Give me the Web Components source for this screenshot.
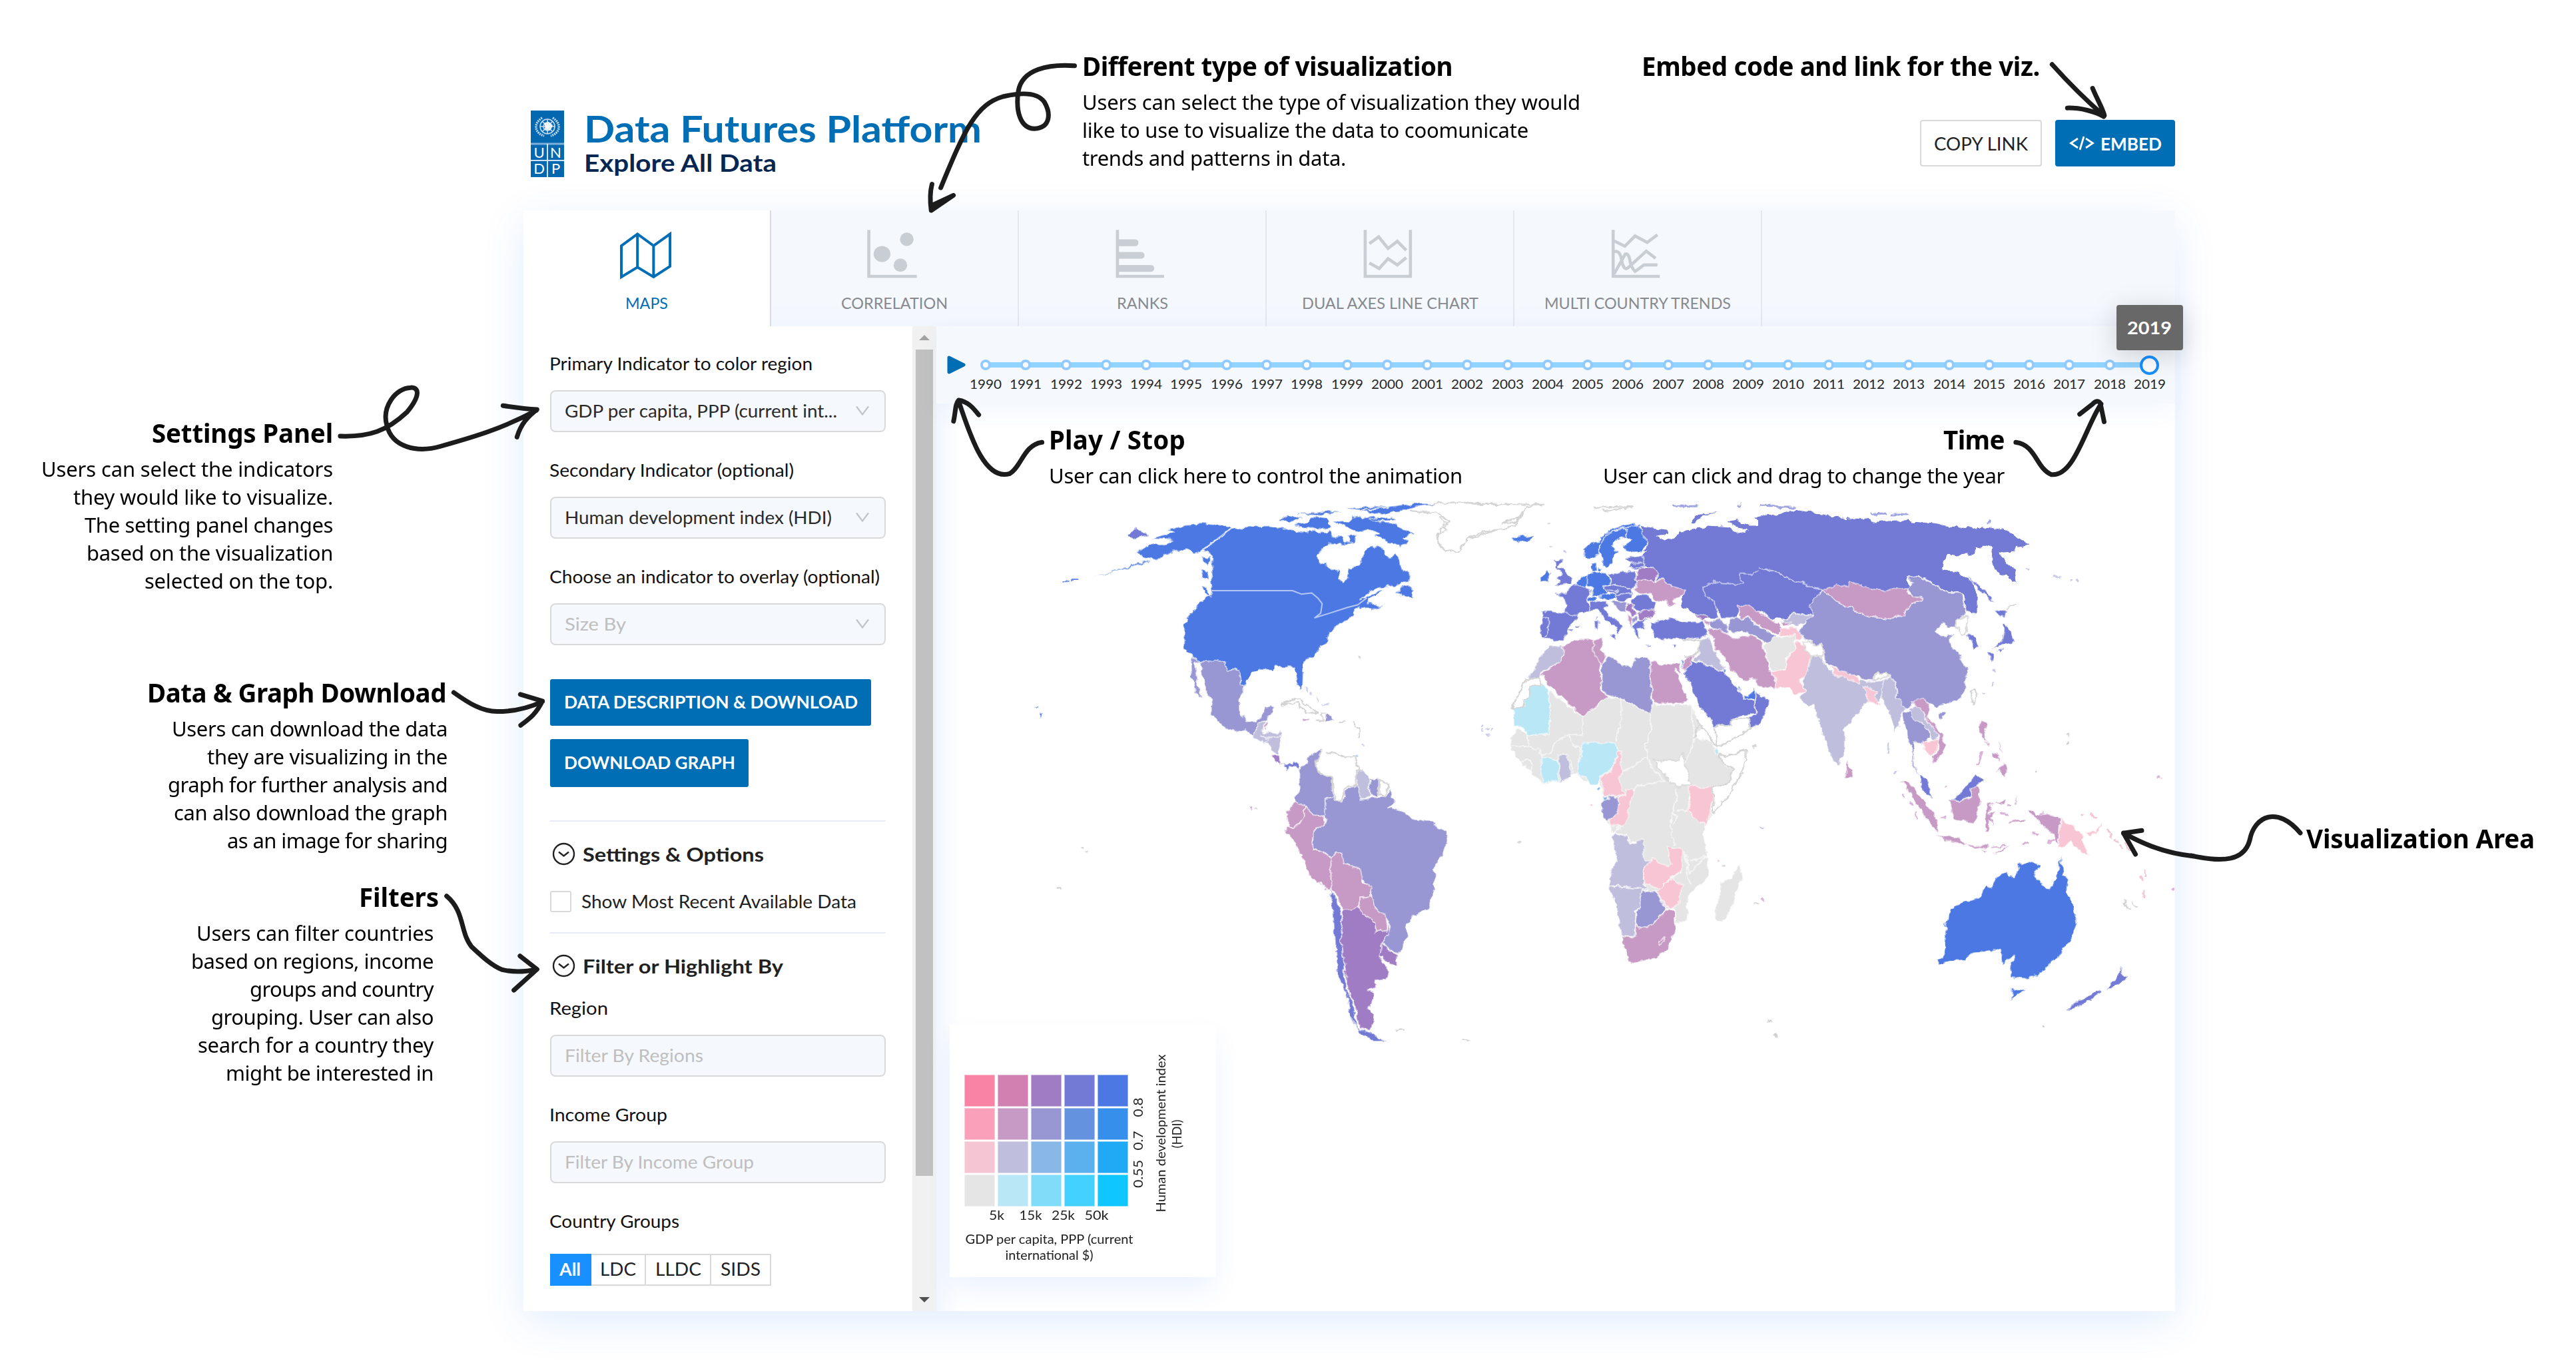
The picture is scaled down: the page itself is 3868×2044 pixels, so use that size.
<!DOCTYPE html>
<html lang="en">
<head>
<meta charset="utf-8">
<title>Data Futures Platform</title>
<style>
html,body{margin:0;padding:0;background:#fff;overflow:hidden}
body{width:3868px;height:2044px;position:relative;font-family:Lato,"Liberation Sans",sans-serif;color:#212121}
</style>
</head>
<body>
<data-platform></data-platform>
<note-arrows></note-arrows>

<note-card style="left:1625px;top:72px"><fit-text track slot="title" w="556">Different type of visualization</fit-text><fit-text track w="748">Users can select the type of visualization they would</fit-text><fit-text track w="670">like to use to visualize the data to coomunicate</fit-text><fit-text track w="396">trends and patterns in data.</fit-text></note-card>
<note-card style="left:2465px;top:72px"><fit-text track slot="title" w="598">Embed code and link for the viz.</fit-text></note-card>
<note-card class="end" style="right:3368px;top:623px"><fit-text track slot="title" w="272">Settings Panel</fit-text><fit-text track w="438">Users can select the indicators</fit-text><fit-text track w="390">they would like to visualize.</fit-text><fit-text track w="373">The setting panel changes</fit-text><fit-text track w="370">based on the visualization</fit-text><fit-text track w="283">selected on the top.</fit-text></note-card>
<note-card class="end" style="right:3196px;top:1013px"><fit-text track slot="title" w="449" style="margin-right:2px">Data &amp; Graph Download</fit-text><fit-text track w="414">Users can download the data</fit-text><fit-text track w="361">they are visualizing in the</fit-text><fit-text track w="420">graph for further analysis and</fit-text><fit-text track w="411">can also download the graph</fit-text><fit-text track w="331">as an image for sharing</fit-text></note-card>
<note-card class="end" style="right:3217px;top:1320px"><fit-text track slot="title" w="120" style="margin-right:-8px">Filters</fit-text><fit-text track w="356">Users can filter countries</fit-text><fit-text track w="364">based on regions, income</fit-text><fit-text track w="276">groups and country</fit-text><fit-text track w="334">grouping. User can also</fit-text><fit-text track w="354">search for a country they</fit-text><fit-text track w="312">might be interested in</fit-text></note-card>
<note-card style="left:1575px;top:633px"><fit-text track slot="title" w="205">Play / Stop</fit-text><fit-text track w="621">User can click here to control the animation</fit-text></note-card>
<note-card class="end" style="right:858px;top:633px"><fit-text track slot="title" w="92">Time</fit-text><fit-text track w="603">User can click and drag to change the year</fit-text></note-card>
<note-card style="left:3463px;top:1232px"><fit-text track slot="title" w="343">Visualization Area</fit-text></note-card>

<script>
const make = (name, html, setup) => customElements.define(name, class extends HTMLElement {
  constructor(){ super(); this.attachShadow({mode:'open'}); }
  connectedCallback(){
    if (this.ready) return; this.ready = true;
    this.shadowRoot.innerHTML = typeof html === 'function' ? html(this) : html;
    if (setup) setup(this);
  }
});

/* Annotation block: bold title with copy lines under it */
make('note-card', `<style>
:host{position:absolute;z-index:6;display:flex;flex-direction:column;align-items:flex-start;font:31px/42px "Noto Sans",sans-serif;color:#000}
:host(.end){align-items:flex-end}
::slotted([slot=title]){font:700 38.5px/50px "Noto Sans",sans-serif;padding-top:2px;margin-bottom:8px}
</style><slot name="title"></slot><slot></slot>`);

/* Hand-drawn arrows lying over the page */
make('note-arrows', `<style>
:host{position:absolute;z-index:5;inset:0;display:block;pointer-events:none}
svg{display:block}
path{fill:none;stroke:#1c1c1c;stroke-width:7;stroke-linecap:round;stroke-linejoin:round;vector-effect:non-scaling-stroke}
</style><svg width="3868" height="2044" viewBox="0 0 3868 2044">
<g transform="translate(760 60) scale(.57398 .33333)">
<path d="M1487,116 C1420,108 1350,130 1340,230 C1332,320 1345,398 1382,400 C1425,395 1425,330 1408,280 C1390,235 1350,235 1300,255 C1230,290 1200,400 1137,666"/>
<path d="M1114,650 C1108,690 1109,730 1112,768 L1170,700 L1114,745 L1150,722"/></g>
<g transform="translate(2400 60) scale(.57398 .35714)">
<path d="M1187,103 C1230,180 1270,245 1322,318 M1293,203 C1302,240 1320,290 1324,318 L1322,322 C1300,300 1260,285 1227,286"/></g>
<g transform="translate(40 540) scale(.5102 .71429)">
<path d="M923,161 C1010,163 1060,150 1120,110 C1160,75 1155,58 1130,59 C1085,60 1045,100 1060,138 C1075,185 1150,197 1220,182 C1320,162 1400,145 1500,107 M1402,97 C1430,100 1470,104 1502,105 C1475,120 1455,135 1443,163"/>
<path d="M1257,700 C1300,722 1340,740 1385,740 C1430,740 1470,735 1518,719 M1453,704 L1518,718 C1500,745 1480,755 1454,769"/>
<path d="M1236,1128 C1290,1160 1275,1205 1310,1235 C1340,1255 1370,1275 1400,1283 C1430,1288 1470,1287 1502,1282 M1452,1254 L1502,1282 L1434,1326"/></g>
<g transform="translate(1400 500) scale(.54847 .33333)">
<path d="M300,493 C250,505 245,600 212,634 C140,670 100,440 72,308 M58,398 C64,355 62,320 72,303 C100,310 115,345 127,369"/></g>
<g transform="translate(2380 620) scale(.57398 .33333)">
<path d="M1127,133 C1180,145 1180,250 1220,278 C1280,290 1310,60 1350,-40 M1294,6 L1328,-40 Q1340,-62 1348,-44 L1358,40"/></g>
<g transform="translate(2640 740) scale(.40816 .54847)">
<path d="M1344,932 C1400,955 1480,985 1600,995"/><path d="M1411,925 L1344,932 L1388,990"/></g>
<path d="M3290,1285 C3340,1296 3370,1292 3378,1262 C3385,1225 3420,1210 3454,1251"/>
</svg>`);

/* The application frame */
make('data-platform', `<style>
:host{display:flex;flex-direction:column;width:2480px;height:1969px;padding-left:786px}
.frame{display:flex;flex-direction:column;height:1653px;background:#fff;box-shadow:0 16px 60px rgba(0,110,255,.12)}
.body{display:flex;height:1479px}
</style>
<app-header></app-header>
<div class="frame"><tab-strip></tab-strip><div class="body"><settings-panel></settings-panel><viz-area></viz-area></div></div>`);

make('app-header', `<style>
:host{display:flex;height:150px;padding:166px 0 0 11px}
.logo{flex:none;width:50px;height:100px}
.names{display:flex;flex-direction:column;margin:-2px 0 0 30px;font-weight:700}
.t{font-size:56px;line-height:58px;color:#006eb5}
.s{font-size:37px;line-height:44px;color:#072652}
.acts{display:flex;margin:14px 0 0 auto;gap:20px}
.b{box-sizing:border-box;height:70px;display:flex;align-items:center;justify-content:center;gap:9px;font-size:27px;border-radius:4px}
.c{width:183px;border:2px solid #d9d9d9;color:#212121}
.e{width:180px;background:#006eb5;color:#fff;font-weight:700}
</style>
<svg class="logo" viewBox="0 0 50 100"><path fill="#0468b1" d="M0 0h50v100H0z"/><g fill="none" stroke="#c3dcf0" stroke-width="1.6"><circle cx="25" cy="24" r="11"/><circle cx="25" cy="24" r="6"/><path d="M14 24h22M25 13v22M17 16l16 16M33 16L17 32"/><path stroke-width="3.4" stroke-dasharray="2 1.2" d="M17 11C3 20 6 34 20 38M33 11c14 9 11 23-3 27"/></g><path fill="#fff" opacity=".85" d="M20 19l7-2 6 5-4 8-7-1z"/><path stroke="#7fb0d9" stroke-width="3" d="M0 50h50"/><path stroke="#cfe2f2" stroke-width="2" d="M0 75h50M25 50v50"/><g fill="#fff" font-family="Lato,sans-serif" font-size="22" text-anchor="middle"><text x="12.500" y="70.500">U</text><text x="37.500" y="70.500">N</text><text x="12.500" y="95">D</text><text x="37.500" y="95">P</text></g></svg>
<div class="names"><fit-text class="t" w="597">Data Futures Platform</fit-text><fit-text class="s" w="289">Explore All Data</fit-text></div>
<div class="acts"><div class="b c"><fit-text w="141">COPY LINK</fit-text></div>
<div class="b e"><svg width="38" height="22" viewBox="0 0 38 22" fill="none" stroke="#fff" stroke-width="2.800"><path d="M13 4L2.500 11L13 18M25 4L35.500 11L25 18M22 1L16 21"/></svg><fit-text w="92">EMBED</fit-text></div></div>`);

make('tab-strip', `<style>
:host{display:flex;height:174px;background:linear-gradient(#f5f8fd 80%,#f1f5fe)}
</style>
<viz-tab on w="64" box="296 850 146 230" label="MAPS" icon="map"></viz-tab>
<viz-tab w="160" box="946 850 140 230" label="CORRELATION" icon="scatter"></viz-tab>
<viz-tab w="77" box="104 850 120 230" label="RANKS" icon="ranks"></viz-tab>
<viz-tab w="265" box="634 850 120 230" label="DUAL AXES LINE CHART" icon="dual"></viz-tab>
<viz-tab w="280" box="1164.500 850 120 230" label="MULTI COUNTRY TRENDS" icon="multi"></viz-tab>`);

const icons = {
map:'<path d="M303,928 L345,875 387,928 430,875 430,1020 387,1068 345,1024 303,1068Z M345,875V1024 M387,928V1068"/>',
scatter:'<path d="M952,857V1065H1072"/><g fill="#c8ced4" stroke="none"><ellipse cx="985" cy="965" rx="21" ry="36"/><ellipse cx="1047" cy="899" rx="17" ry="30"/><ellipse cx="1031" cy="1015" rx="17" ry="30"/></g>',
ranks:'<path d="M111,857V1065H211"/><g fill="#c8ced4" stroke="none"><path d="M111,899H148Q156,899 156,914T148,930H111ZM111,956H161Q169,956 169,971T161,986H111ZM111,1014H181Q190,1014 190,1029T181,1045H111Z"/></g>',
dual:'<path d="M641,857V1065H738V857M650,918L670,888 690,940 710,908 729,948M650,1005L671,1030 690,986 710,1014 729,981"/>',
multi:'<path d="M1172,857V1065H1272M1174,906L1197,930 1219,884 1245,913 1267,879M1174,1054L1198,965Q1204,960 1207,985Q1210,1025 1219,1043Q1228,1030 1238,1014H1267M1174,955Q1186,945 1190,990Q1194,1040 1203,1028L1243,952 1263,984"/>'};
make('viz-tab', el => `<style>
:host{box-sizing:border-box;display:flex;flex-direction:column;align-items:center;width:372px;height:174px;padding-top:27px;border-right:2px solid #e4e7eb;color:#868a8f;font-size:22.500px;line-height:30px}
:host([on]){background:#fff;color:#006eb5;border-color:#d9dce2}
svg{width:84px;height:77px;margin-bottom:21px;overflow:visible;fill:none;stroke:#c8ced4;stroke-width:4.600}
:host([on]) svg{stroke:#006eb5;stroke-width:4}
path{vector-effect:non-scaling-stroke}
</style><svg preserveAspectRatio="none" viewBox="${el.getAttribute('box')}">${icons[el.getAttribute('icon')]}</svg><fit-text w="${el.getAttribute('w')}">${el.getAttribute('label')}</fit-text>`);

const chev = '<svg width="22" height="16" viewBox="0 0 22 16" fill="none" stroke="#bfc4ca" stroke-width="2.200"><path d="M2 1.500L11 13.500L20 1.500"/></svg>';
make('form-field', el => `<style>
:host{display:flex;flex-direction:column;gap:24px;font-size:26.500px}
.l{line-height:32px;color:#111;margin-left:-1px}
.box{box-sizing:border-box;height:63px;border:2px solid #d9d9d9;border-radius:8px;background:#f5f8fd;padding:0 22px 1px 20px;display:flex;align-items:center;justify-content:space-between;line-height:32px;color:#2a2a2a}
:host([ph]) .box{color:#bfbfbf}
</style><fit-text class="l" w="${el.getAttribute('lw')}">${el.getAttribute('label')}</fit-text><div class="box"><fit-text w="${el.getAttribute('vw')}">${el.getAttribute('value')}</fit-text>${el.hasAttribute('drop')?chev:''}</div>`);

make('section-head', `<style>
:host{display:flex;align-items:center;gap:11px;height:36px;padding-left:3px;font-weight:700;font-size:29px;line-height:35px}
</style><svg width="35" height="35" viewBox="0 0 35 35" fill="none" stroke="#212121" stroke-width="2.400"><circle cx="17.500" cy="17.500" r="15.500"/><path d="M10 14.500L17.500 20.500L25 14.500"/></svg><slot></slot>`);

make('settings-panel', `<style>
:host{display:flex;width:620px;background:#fff}
.col{box-sizing:border-box;width:584px;padding:40px 40px 0 40px;display:flex;flex-direction:column}
.fields{display:flex;flex-direction:column;gap:41px}
.btn{align-self:flex-start;box-sizing:border-box;background:#006eb5;color:#fff;font-weight:700;font-size:26px;padding:0 0 2px 21px;display:flex;align-items:center;border-radius:3px;line-height:32px}
hr{width:100%;height:2px;border:0;background:#e8eaf6;margin:0;flex:none}
.chk{display:flex;align-items:center;gap:15px;height:32px;font-size:26px;line-height:32px;margin:38px 0 30px}
.chk i{box-sizing:border-box;width:32px;height:32px;border:2px solid #d9d9d9;border-radius:3px}
.lab{font-size:26.500px;line-height:32px;color:#111;margin:41px 0 33px -1px}
.radio{display:flex;height:48px;font-size:26px;line-height:32px}
.radio span{box-sizing:border-box;border:2px solid #d9d9d9;border-left:0;display:flex;align-items:center;justify-content:center;padding-bottom:2px}
.radio .on{background:#1890ff;border-color:#1890ff;color:#fff;font-weight:700}
.bar{width:36px;background:#f1f1f1;display:flex;flex-direction:column;align-items:center}
.bar b{display:block;width:26px;height:1241px;background:#c1c1c1;margin-top:14px}
.bar svg{display:block;margin-top:13px}
</style>
<div class="col">
<div class="fields">
<form-field drop label="Primary Indicator to color region" lw="395" value="GDP per capita, PPP (current int..." vw="409"></form-field>
<form-field drop label="Secondary Indicator (optional)" lw="367" value="Human development index (HDI)" vw="401"></form-field>
<form-field drop ph label="Choose an indicator to overlay (optional)" lw="496" value="Size By" vw="92"></form-field>
</div>
<div class="btn" style="width:482px;height:70px;margin-top:51px"><fit-text w="441">DATA DESCRIPTION &amp; DOWNLOAD</fit-text></div>
<div class="btn" style="width:298px;height:72px;margin:20px 0 50px"><fit-text w="257">DOWNLOAD GRAPH</fit-text></div>
<hr>
<section-head style="margin-top:30px"><fit-text w="272">Settings &amp; Options</fit-text></section-head>
<div class="chk"><i></i><fit-text w="413">Show Most Recent Available Data</fit-text></div>
<hr>
<section-head style="margin:30px 0"><fit-text w="301">Filter or Highlight By</fit-text></section-head>
<div class="fields">
<form-field ph label="Region" lw="88" value="Filter By Regions" vw="208"></form-field>
<form-field ph label="Income Group" lw="177" value="Filter By Income Group" vw="284"></form-field>
</div>
<fit-text class="lab" w="195">Country Groups</fit-text>
<div class="radio"><span class="on" style="width:62px"><fit-text w="32">All</fit-text></span><span style="width:82px"><fit-text w="54">LDC</fit-text></span><span style="width:98px"><fit-text w="69">LLDC</fit-text></span><span style="width:90px"><fit-text w="60">SIDS</fit-text></span></div>
</div>
<div class="bar"><svg width="16" height="8"><path fill="#a3a3a3" d="M8 0l8 8H0z"/></svg><b></b><svg style="margin-top:auto;margin-bottom:13px" width="16" height="8"><path fill="#505050" d="M8 8l8-8H0z"/></svg></div>`);

const years = Array.from({length:30},(_,i)=>1990+i);
make('time-line', () => `<style>
:host{display:flex;height:116px;background:#f5f8fd;padding-left:16px;position:relative;z-index:1;box-shadow:0 14px 34px rgba(0,90,255,.05)}
.play{flex:none;width:28px;height:28px;margin-top:44px}
.ticks{display:flex;padding-top:43px}
.t{width:60.270px;display:flex;flex-direction:column;align-items:center;font-size:19.500px;line-height:24px;gap:2px;position:relative;color:#262626}
.d{width:100%;height:30px;display:flex;align-items:center;justify-content:center;background:linear-gradient(#91d5ff,#91d5ff) 0 50%/100% 8px no-repeat}
.t:first-child .d{background-size:50% 8px;background-position:100% 50%}
.t:last-child .d{background-size:50% 8px}
.d i{box-sizing:border-box;width:16px;height:16px;border:4px solid #91caff;border-radius:50%;background:#fff}
.t:last-child i{width:29px;height:29px;border:4px solid #1890ff}
.tip{position:absolute;left:-20px;top:-75px;width:100px;height:68px;background:#686868;color:#fff;border-radius:4px;display:flex;align-items:center;justify-content:center;font-size:27px;font-weight:700;box-shadow:0 8px 40px rgba(0,0,0,.17)}
</style><svg class="play" viewBox="0 0 28 28"><path d="M3 3L25 14L3 25Z" fill="#006eb5" stroke="#006eb5" stroke-width="5" stroke-linejoin="round"/></svg>
<div class="ticks">${years.map(y=>`<div class="t"><div class="d"><i></i></div><fit-text w="48">${y}</fit-text>${y==2019?'<div class="tip"><fit-text w="67">2019</fit-text></div>':''}</div>`).join('')}</div>`);

make('viz-area', `<style>
:host{display:flex;flex-direction:column;flex:1;min-width:0;position:relative;background:linear-gradient(90deg,#f2f6fe,#fff 36px)}
bivariate-legend{position:absolute;left:20px;bottom:51px}
</style><time-line></time-line><world-map></world-map><bivariate-legend></bivariate-legend>`);

const ramp = [['#f983a5','#d27fb2','#9f7cc4','#727ad5','#4b78e3'],['#fba0ba','#c79ac6','#9896d3','#6492df','#368feb'],['#f5c5d3','#bfbedd','#89b7e6','#5bb1ee','#20aaf6'],['#e5e5e5','#b9e7f6','#80dcf9','#43d1ff','#0fc6ff']];
const fit = 'lengthAdjust="spacingAndGlyphs" textLength';
make('bivariate-legend', () => `<style>
:host{display:block;width:400px;height:380px;background:#fff;box-shadow:0 20px 40px -4px rgba(0,90,255,.09)}
svg{display:block;font:19px Lato,sans-serif}
text{text-anchor:middle;fill:#212121}
</style><svg width="400" height="380" viewBox="1426 1538 400 380">
${ramp.map((r,j)=>r.map((c,i)=>`<rect x="${1449+i*50}" y="${1615+j*50}" width="44" height="46" fill="${c}" stroke="${c}" stroke-opacity=".55" stroke-width="2"/>`).join('')).join('')}
<text x="1496.500" y="1832" ${fit}="23">5k</text><text x="1547.500" y="1832" ${fit}="34">15k</text><text x="1596.500" y="1832" ${fit}="35">25k</text><text x="1646.500" y="1832" ${fit}="36">50k</text>
<text x="1575.500" y="1868" ${fit}="252">GDP per capita, PPP (current</text><text x="1575.500" y="1892" ${fit}="132">international $)</text>
<text transform="translate(1716 1663) rotate(-90)" ${fit}="29">0.8</text><text transform="translate(1716 1713) rotate(-90)" ${fit}="29">0.7</text><text transform="translate(1716 1763) rotate(-90)" ${fit}="42">0.55</text>
<text transform="translate(1749.500 1702) rotate(-90)" ${fit}="237">Human development index</text><text transform="translate(1773.500 1703) rotate(-90)" ${fit}="43">(HDI)</text>
</svg>`);

/* World map. Each list entry is [colour key, path data]; a sheet is a drawing grid with its own origin and scale. */
const col = {A:'#4b78e3',B:'#727ad5',C:'#9896d3',D:'#c79ac6',E:'#9f7cc4',F:'#bfbedd',G:'#f7c5d3',H:'#e5e5e5',I:'#b9e7f6',J:'#89b7e6'};
const americas = [
['A','M352,190L375,178 400,172 440,168 475,158 400,155 440,145 475,140 455,130 500,122 570,115 640,120 675,124 565,190 545,193 520,185 480,190 440,202 405,212 375,205Z'],
['A','M205,255L300,233 380,213 400,213 320,233Z'],
['A','M675,124L710,127 750,124 810,123 860,128 900,138 920,135 960,137 990,140 1000,130 1010,150 1040,145 1050,165 1085,155 1080,167 1060,170 1000,168 975,180 958,200 965,215 990,220 1010,238 1035,235 1028,262 1045,270 1058,260 1062,235 1100,225 1108,210 1112,190 1125,180 1150,175 1180,180 1190,195 1205,206 1225,195 1238,215 1245,235 1272,250 1270,262 1240,275 1190,280 1150,288 1100,315 1140,300 1175,290 1170,298 1130,312 1130,325 1165,330 1190,325 1140,343 1120,333 1085,340 1078,360 1040,375 1010,395 995,400 990,430 975,440 925,472 912,485 910,540 900,550 890,540 887,492 865,490 820,490 810,500 760,498 735,510 718,528 712,540 700,535 695,500 680,494 660,502 645,475 605,480 565,478 535,465 532,455 512,445 510,380 530,352 575,312 600,300 605,292 598,270 607,250 605,200 585,192 565,190Z'],
['A','M1225,299L1245,280 1262,278 1280,290 1278,312 1240,303Z'],
['A','M1010,110L1060,108 1075,98 1120,100 1150,95 1165,110 1200,112 1230,122 1285,143 1250,150 1265,165 1240,178 1200,165 1180,155 1150,150 1170,140 1130,130 1100,138 1060,125Z'],
['A','M880,120L930,108 960,95 1000,105 1005,125 950,132Z'],['A','M825,110L860,95 910,100 875,112Z'],
['A','M1100,84L1180,73 1290,62 1360,65 1290,72 1230,84 1180,92 1150,88Z'],['A','M885,90L990,82 1040,86 960,92Z'],['A','M1050,76L1150,70 1200,70 1110,80Z'],['A','M1060,150L1090,148 1085,165 1065,162Z'],['A','M1130,104L1200,98 1220,105 1150,110Z'],
['A','M570,205L600,200 598,225 572,215Z'],['A','M570,235L595,240 590,262 575,258Z'],['A','M572,280L590,285 598,308 580,295Z'],['A','M22,610L36,614 26,624Z'],['A','M8,592h10v4h-10Z'],
['B','M318,145L350,128 390,145 345,157Z'],
['C','M535,465L565,478 645,475 660,502 680,494 695,500 700,535 712,540 697,575 700,610 720,632 750,630 770,622 780,600 815,595 800,618 785,632 760,635 755,655 738,670 715,655 685,660 640,645 600,612 605,585 580,540 568,510 565,480 548,480 555,520 568,572 552,560 545,525 530,515 538,500Z'],
['F','M738,670L755,655 760,635 782,635 778,665 838,660 835,690 828,722 805,712 790,690 765,685Z'],['D','M781,638L792,632 785,655Z'],
['E','M805,720L828,722 838,748 820,738Z'],['B','M838,742L858,750 880,738 898,745 900,760 880,748 860,762Z'],
['C','M882,835L898,810 897,765 905,750 922,745 930,722 950,715 975,705 958,730 960,768 1008,778 1010,832 985,835 988,885 950,880 920,858 890,845Z'],
['F','M1100,755L1130,775 1132,800 1137,830 1105,838 1095,800 1090,775Z'],['C','M1132,785L1168,783 1165,827 1137,828Z'],
['C','M985,835L1010,832 1035,845 1055,830 1050,810 1095,800 1105,838 1190,828 1205,808 1215,845 1200,860 1235,862 1285,890 1340,892 1365,910 1390,918 1396,945 1385,975 1355,1012 1353,1070 1335,1125 1275,1145 1258,1165 1265,1190 1232,1242 1178,1215 1205,1175 1190,1145 1150,1120 1143,1085 1130,1055 1105,1045 1100,1020 1045,1000 1040,975 1005,990 980,975 950,965 940,935 960,908 985,905Z'],
['D','M882,838L920,858 915,885 880,912 862,905 855,870Z'],
['D','M855,905L880,912 915,885 922,858 950,880 980,885 983,905 955,910 940,940 950,968 980,975 1005,992 1005,1060 1003,1078 935,1040 915,1005 885,950 855,925Z'],
['D','M1005,990L1040,975 1050,1003 1105,1022 1110,1050 1135,1058 1143,1090 1098,1095 1095,1125 1045,1128 1025,1095 1005,1070Z'],
['D','M1098,1095L1143,1090 1150,1120 1190,1142 1195,1180 1155,1185 1153,1160 1098,1125Z'],
['B','M1003,1075L1020,1095 1040,1130 1038,1200 1050,1260 1055,1330 1080,1380 1092,1425 1080,1425 1065,1390 1055,1345 1028,1300 1020,1220 1012,1140Z'],['B','M1070,1405L1100,1438 1140,1448 1190,1470 1150,1470 1100,1448Z'],
['E','M1045,1125L1095,1122 1153,1160 1155,1185 1195,1180 1198,1165 1205,1180 1175,1215 1170,1250 1200,1290 1195,1308 1155,1312 1155,1330 1130,1335 1148,1350 1130,1385 1152,1402 1138,1442 1100,1435 1088,1385 1060,1335 1050,1260 1038,1200 1040,1150Z'],
['E','M1175,1215L1230,1245 1222,1268 1185,1262 1170,1245Z'],['C','M987,612L1018,628 985,635Z'],['D','M910,628h18v6h-18Z'],['D','M728,855l14,2 -6,10Z'],['J','M1088,720h6v8h-6Z']];
const west = [
['A','M190,145L240,132 288,140 270,152 230,160 205,152Z'],['B','M372,212L405,208 412,222 390,235 415,240 435,262 452,272 440,290 375,297 400,283 382,270 405,262 398,248 378,235Z'],['A','M318,262L345,245 362,258 350,278 320,280Z'],
['A','M490,182L515,165 560,155 575,140 610,115 680,100 735,102 730,112 680,115 640,115 610,125 590,140 565,165 565,195 520,210 500,200Z'],
['A','M565,165L600,128 650,115 680,122 678,140 640,152 622,170 625,185 640,190 620,212 620,225 590,238 575,220 568,190Z'],
['A','M650,112L690,115 720,103 745,130 770,165 740,188 680,190 665,175 700,152 680,140 678,120Z'],['A','M528,225L550,222 555,248 535,252Z'],['A','M558,238h18v12h-18Z'],
['B','M680,205L745,198 755,235 720,245 680,240 695,225Z'],['A','M510,262L545,252 600,256 608,290 582,300 600,318 590,328 535,330 530,305 512,295Z'],['A','M468,292L490,268 515,262 512,310Z'],
['B','M605,258L650,248 718,252 720,290 705,308 610,292Z'],['E','M718,272L735,240 790,235 808,260 800,280 720,282Z'],
['D','M710,310L722,282 800,280 840,275 850,290 925,305 920,325 870,345 880,358 850,362 850,345 830,342 800,350 790,320 740,325Z'],
['B','M582,298L610,292 705,308 700,330 660,348 640,345 635,318 600,318Z'],['A','M560,330L635,318 638,335 600,342Z'],['A','M515,337L535,330 555,335 545,347 520,348Z'],
['B','M380,320L425,318 440,300 465,290 530,312 515,345 525,375 490,382 470,392 412,385 425,355 410,330Z'],
['B','M320,380L365,378 470,390 470,402 435,425 430,450 400,468 375,472 320,460 315,435 325,400Z'],
['B','M520,375L525,350 560,345 592,345 598,358 585,370 620,400 655,420 657,430 645,450 635,428 590,405 565,378 540,370Z'],['B','M600,452L637,452 632,465Z'],['B','M543,405L560,405 558,435 545,435Z'],['B','M548,388L556,392 552,402Z'],
['B','M700,340L720,325 770,325 800,355 790,375 730,378 705,360Z'],['E','M725,380L795,372 785,400 735,405Z'],['E','M678,350L705,355 722,385 700,392 680,370Z'],['C','M610,345L675,350 682,385 650,378Z'],['D','M683,385L702,395 697,425 688,410Z'],['C','M700,395L725,392 725,408 702,412Z'],
['B','M700,418L740,405 775,405 745,415 752,432 725,435 738,462 720,455 705,430Z'],['B','M750,485L790,487 780,492Z'],['B','M868,488L890,485 878,496Z'],
['B','M780,412L860,400 920,412 1000,408 1012,430 1022,455 960,462 910,468 880,466 830,470 795,460 785,430Z'],
['B','M1005,300L1040,285 1090,290 1165,290 1155,258 1210,258 1240,242 1270,248 1320,252 1420,285 1500,308 1490,335 1462,350 1465,390 1380,385 1330,405 1290,400 1240,378 1150,358 1145,395 1110,400 1080,400 1055,370 1050,345 1010,330Z'],
['E','M960,385L1000,390 1028,400 1000,407Z'],['C','M1025,412L1070,400 1105,430 1105,447 1080,440 1040,430Z'],['D','M1000,408L1030,412 1025,428Z'],
['C','M1110,402L1145,395 1165,405 1190,400 1240,430 1308,455 1285,485 1250,470 1205,450 1105,440Z'],['D','M1143,360L1175,355 1215,370 1240,383 1290,402 1330,428 1320,450 1250,430 1190,398 1160,405Z'],
['F','M1335,405L1380,385 1465,390 1440,410 1400,425 1350,422Z'],['G','M1320,435L1355,428 1390,430 1420,460 1385,465 1325,455Z'],['D','M1325,412L1375,412 1340,425Z'],
['D','M1015,432L1070,435 1120,460 1160,462 1200,450 1250,475 1255,505 1275,545 1285,575 1308,600 1300,625 1235,615 1215,595 1180,600 1120,570 1095,530 1055,500 1045,470Z'],
['H','M1252,487L1300,460 1350,462 1385,450 1392,490 1375,510 1350,530 1345,560 1290,568 1270,530Z'],
['G','M1278,568L1345,562 1350,535 1392,490 1395,468 1425,490 1455,525 1445,575 1405,595 1432,635 1385,640 1360,620 1300,622 1308,600Z'],
['F','M985,465L1025,460 1050,500 1060,520 1095,560 1070,565 960,530 985,505Z'],['D','M915,530L962,518 950,545 930,570 915,560Z'],['A','M905,530h10l-4,28Z'],
['B','M918,577L950,545 950,532 1000,545 1095,572 1150,630 1170,655 1220,660 1222,700 1120,720 1118,738 1055,740 1045,745 1010,695 990,690 950,620Z'],
['A','M1170,645L1195,648 1218,620 1220,655 1175,657Z'],['B','M1222,635L1280,665 1250,720 1225,742 1200,748 1185,718 1225,700Z'],['A','M1083,560l16,6 -6,12Z'],['A','M1146,615l10,2 -2,14Z'],
['F','M255,590L300,560 305,530 355,485 410,490 418,520 380,545 320,572 315,592Z'],
['H','M190,775L225,750 265,770 355,765 350,628 490,712 600,650 650,655 770,700 787,672 955,675 975,720 1000,750 970,770 970,782 1040,790 1065,835 1090,865 1135,880 1095,930 1040,938 1040,1020 1008,1060 1005,1090 1022,1155 1022,1215 1000,1240 935,1285 935,1355 885,1372 880,1325 850,1325 750,1260 750,1180 745,1105 690,1115 680,1085 620,1085 605,1062 570,1000 580,960 560,905 530,930 480,905 460,895 395,920 325,928 270,885 195,825Z'],
['I','M203,682L248,682 250,655 268,652 270,612 318,612 318,600 350,628 355,765 265,770 240,745 205,745Z'],
['D','M318,578L380,545 418,520 410,490 460,468 540,465 540,500 565,530 570,590 575,630 600,650 495,712 460,690 350,610Z'],['D','M540,470L575,462 580,485 570,500 592,522 570,548 555,525 537,500Z'],
['C','M575,545L600,520 640,530 650,545 700,552 712,525 745,520 778,535 785,695 770,700 650,655 590,640 572,610Z'],['D','M778,537L830,545 900,542 912,580 880,560 935,655 920,670 788,670Z'],
['I','M318,845L345,845 390,850 390,918 328,925 315,890Z'],['F','M393,835L435,835 445,905 398,922Z'],['I','M490,800L520,790 560,800 630,795 650,820 605,890 570,900 555,930 525,930 505,905 478,900 478,855 490,840Z'],
['G','M570,905L610,890 640,830 655,822 652,850 660,875 650,910 668,965 585,962Z'],['G','M640,968L668,965 680,945 707,945 690,1010 668,1062 610,1062 610,1035 645,1020Z'],['C','M580,980L605,980 605,962 640,968 648,1020 610,1035 600,1050 568,1010Z'],['J','M578,965h22v15h-20Z'],
['G','M935,930L985,938 1042,938 1035,1010 1010,1060 935,1010 945,965Z'],['I','M1045,820l14,-10 4,18 -12,4Z'],
['F','M620,1088L678,1088 690,1118 722,1115 722,1105 750,1105 752,1165 780,1168 780,1185 752,1190 752,1245 765,1262 605,1250 615,1210 635,1170Z'],['F','M605,1252L765,1262 738,1265 735,1320 718,1325 715,1412 665,1412 645,1380 640,1330Z'],
['G','M752,1190L785,1165 855,1190 868,1180 852,1160 852,1125 915,1135 912,1205 860,1225 820,1262 755,1245Z'],['G','M805,1268L865,1228 908,1245 900,1310 865,1325 835,1300Z'],['C','M738,1268L800,1265 845,1325 795,1370 735,1390 720,1370 722,1325 735,1320Z'],
['D','M665,1412L715,1415 718,1375 735,1390 795,1370 845,1328 880,1328 885,1395 850,1450 800,1482 700,1498 683,1485Z'],['H','M1155,1180L1162,1225 1100,1360 1070,1370 1050,1358 1052,1320 1070,1285 1072,1240 1120,1225Z']];
const russiaWest = 'M735,108L850,120 860,133 800,135 840,152 870,148 900,125 1000,115 1020,105 1100,108 1150,128 1195,122 1140,108 1105,92 1140,85 1200,105 1270,105 1215,80 1330,70 1400,58 1500,68 1568,80 1568,330 1490,310 1420,290 1320,262 1240,260 1165,290 1090,290 1040,287 1005,300 1010,330 1050,345 1062,400 1000,395 940,375 905,355 925,310 850,288 840,275 808,275 808,260 790,235 755,232 745,198 765,190 755,185 772,165 745,130ZM945,92L980,70 1075,60 1000,72 962,97Z';
const east = [
['C','M240,268L300,305 340,312 380,335 485,345 540,335 545,318 605,290 575,285 545,262 568,250 548,228 600,230 690,268 750,278 765,330 740,345 720,365 700,372 685,356 652,378 690,395 720,388 700,405 735,440 755,465 770,490 765,530 745,560 695,580 660,585 600,568 565,578 545,595 510,560 505,520 480,500 430,515 390,510 340,500 245,465 240,425 195,410 150,385 160,365 205,335 190,310 205,290Z'],
['D','M240,268L290,252 335,260 330,240 410,260 475,268 515,258 545,262 550,280 605,290 545,318 540,335 485,345 380,335 340,312 300,305Z'],
['F','M195,450L235,450 245,468 275,495 340,505 400,515 460,515 475,505 470,545 440,575 405,570 385,585 350,620 318,650 318,718 292,750 270,725 235,660 210,580 185,590 150,560 172,545 160,515 190,480Z'],
['G','M270,478L310,485 375,512 370,524 275,495Z'],['G','M385,530L430,540 432,560 450,585 410,572Z'],
['F','M465,515L485,500 505,520 510,560 548,590 525,610 520,640 500,655 485,600 460,580 455,545Z'],['F','M540,650L555,665 572,738 562,742 565,700Z'],
['C','M530,605L560,600 600,625 632,655 630,672 600,685 575,682 568,710 570,740 600,780 565,745 562,700 548,665Z'],['F','M555,592L590,580 620,620 662,660 655,680 632,672 632,655 600,625 570,625Z'],
['D','M565,572L605,563 635,580 622,612 668,655 690,690 685,712 645,742 640,725 665,700 662,665 625,625 605,600Z'],['G','M603,680L665,675 662,700 635,722 612,705Z'],['C','M664,605L690,602 680,622 666,620Z'],
['B','M588,768L620,785 640,838 605,815Z'],['D','M325,733L348,762 342,780 325,778Z'],['D','M525,787L560,795 600,835 660,890 660,930 630,905 575,845Z'],['D','M658,938L735,945 768,962 690,957Z'],['D','M770,965L850,966 835,973 780,970Z'],['D','M855,968L920,962 910,968 860,972Z'],['D','M868,993L895,975 930,965 890,985Z'],['D','M820,977l22,6 -6,6Z'],
['D','M705,840L735,845 780,835 785,805 805,800 822,840 795,905 720,895Z'],['B','M712,842L735,830 770,800 800,770 828,790 805,802 785,808 778,832 740,845Z'],
['D','M835,928L836,880 845,850 905,852 910,838 855,857 848,878 875,870 858,888 872,920 850,895 848,925Z'],['D','M815,622L842,632 832,665 850,690 818,665Z'],['D','M835,682L850,690 845,697Z'],['D','M862,708L880,712 895,738 870,725Z'],['D','M885,680L900,715 888,700Z'],['D','M870,768L905,740 920,765 905,780 890,760Z'],['D','M945,825L952,850 945,852Z'],['D','M920,898L985,895 982,902 922,904Z'],
['D','M990,870L1015,865 1022,885 1075,880 1110,893 1105,970 1090,940 1035,905 1005,885Z'],['G','M1112,893L1165,915 1195,940 1190,955 1218,990 1190,985 1150,955 1130,970 1105,975Z'],['G','M1205,932L1245,925 1262,905 1258,925 1225,938Z'],
['A','M1115,995L1122,1045 1138,1050 1138,1100 1160,1130 1165,1150 1175,1180 1155,1220 1110,1260 1030,1322 980,1330 925,1325 930,1295 942,1268 895,1290 895,1258 870,1250 800,1258 750,1280 700,1282 665,1293 660,1280 680,1270 688,1240 688,1185 700,1160 710,1140 750,1122 815,1108 840,1075 855,1082 880,1050 915,1038 920,1052 945,1050 960,1015 1000,1010 1038,1018 1012,1048 1065,1085 1085,1080 1100,1040Z'],
['A','M935,1360L985,1358 930,1388Z'],['B','M1130,1415L1180,1390 1260,1360 1262,1368 1220,1390 1150,1418Z'],['B','M1280,1362L1300,1340 1330,1320 1335,1292 1342,1322 1362,1326 1310,1355Z'],
['B','M768,225L800,245 870,298 850,295 800,255Z'],['B','M870,318L918,325 905,338 885,338Z'],['B','M895,355L925,370 942,412 905,415 850,430 900,405 905,375Z'],['B','M842,437L868,442 862,462Z'],['B','M880,432L905,428 890,440Z'],['B','M766,386L800,395 812,420 790,427Z']];
const russiaEast = 'M0,65L60,60 140,48 235,58 200,70 290,68 390,72 440,82 540,75 640,82 700,92 790,96 860,92 900,98 950,120 998,143 950,150 945,160 885,162 890,175 945,210 950,245 870,210 860,190 865,150 845,146 800,150 795,168 690,172 680,210 740,222 785,240 805,275 805,330 785,332 762,320 755,278 690,268 600,230 548,230 555,262 515,260 475,270 340,262 290,254 240,270 130,250 0,215Z';
const draw = a => a.map(([k,d])=>`<path fill="${col[k]}" d="${d}"/>`).join('');
make('world-map', () => `<style>
:host{display:block;height:1363px}
svg{display:block;overflow:visible}
path{vector-effect:non-scaling-stroke;stroke-linejoin:round}
.land path{stroke:#fff;stroke-opacity:.5;stroke-width:2}
.line path{fill:none;stroke:#fff;stroke-opacity:.6;stroke-width:2}
.none path{fill:#fff;stroke:#dcdcdc;stroke-width:2.200}
.open path{fill:none;stroke:#d4d4d4;stroke-width:2.200}
.dots path{fill:none;stroke-width:3;stroke-linecap:round}
</style><svg width="1860" height="1363" viewBox="1406 606 1860 1363">
<defs><filter id="coast" x="-2%" y="-2%" width="104%" height="104%" color-interpolation-filters="sRGB"><feTurbulence type="fractalNoise" baseFrequency=".09" numOctaves="3" seed="4"/><feDisplacementMap in="SourceGraphic" scale="9" xChannelSelector="R" yChannelSelector="G"/></filter></defs>
<g filter="url(#coast)">
<g transform="translate(1550 720) scale(.44643 .57398)">
<g class="land">${draw(americas)}</g>
<g class="line"><path d="M765,668L785,678 835,668M775,688L800,680"/></g>
<g class="open"><path d="M975,710L955,735 962,768 1008,778 1015,838 1035,842 1052,825 1045,805 1090,800 1090,770 1100,752 1085,725 1040,728 1020,715 985,715"/><path d="M1170,785L1200,800 1185,828 1168,822Z"/><path d="M840,588L885,573 930,592 960,610 920,608 890,585Z"/><path d="M985,612L970,615 980,630 955,630"/><path d="M1032,632L1052,632M1080,635L1098,650 1100,680"/><path d="M1222,1442L1250,1442M1448,1465L1470,1470"/><path d="M1270,82L1360,88 1400,108 1380,122 1395,135 1362,142 1370,175 1410,190 1430,188 1465,158 1568,130M1350,64L1420,60 1568,64M1370,98L1395,120 1370,130 1365,160 1380,180"/></g>
<g class="dots" stroke="#b9b9e4"><path d="M925,545l2,8M935,560l6,6M960,575l2,4M985,590l6,-2M1110,690l2,3M1515,655l4,4M1535,665l3,3" opacity=".6"/><path stroke="#d7d7d7" d="M85,1069h6M168,964h2M182,974h2M1100,467h2M748,863h5"/><path stroke="#6f90e6" d="M105,266h16M135,262h12"/></g>
</g>
<g transform="translate(2200 740) scale(.35714 .47194)">
<path fill="#727ad5" d="${russiaWest}"/>
<g class="land">${draw(west)}</g>
<g class="none"><path d="M795,850L905,852 912,822 930,870 948,925 905,938 860,920 820,885Z"/></g>
<g class="line"><path d="M495,710L492,768 430,775 385,790 355,825 318,838M265,770L270,808 310,815 318,845M440,778L455,805 485,815 475,855M445,850L455,895M190,805L265,808M240,855Q265,840 290,870L270,885M655,655L658,720 635,790M780,700L778,770 755,800 765,835 700,875 655,885M765,835L790,885 840,915 750,930 720,930 710,950M955,675L960,760 965,780 945,830 920,865M885,940L890,970 870,1020 865,1090 885,1120M890,1015L935,1010M945,965L940,1010M870,1020L890,1030 880,1060M920,1140L935,1180 945,1210 1000,1165 1022,1158M940,1170L1022,1155M935,1180Q930,1220 945,1245L930,1205M865,1228L912,1205M885,1372L880,1325M620,1085L640,1068 668,1062M835,1415L815,1430 822,1440 840,1425Z"/><path d="M328,398L350,398 345,455 330,460M680,225L745,222M690,240L752,232M600,310L650,312M640,325L700,320M640,345L600,340M567,180V165"/></g>
<g class="open"><path d="M915,470L985,465 985,502 940,525 920,520"/><path d="M1055,742L1118,740 1120,722 1185,718 1200,752 1130,785 1060,808 1050,745"/><path d="M1045,1020L1040,940 1095,930 1135,880 1075,855 1065,830 1095,838 1180,820 1180,845 1165,890 1120,950Z"/><path d="M255,592L315,592 315,612 270,612 268,652 248,655 245,682 195,684 220,650Z"/><path d="M972,722L1000,750 1060,808M985,740L965,780"/><path d="M0,155L40,135 110,118 210,108 225,85 260,45 335,38 0,35M150,100L220,78 240,60 210,95 160,98M535,50L620,42 700,45 580,58"/></g>
<g class="dots" stroke="#d7d7d7"><path d="M350,97h4M360,170h5M1210,808h14M222,1115h5M1218,1308h8M1088,1187h2"/><path stroke="#c7c6ea" d="M70,742h2M92,750h2M95,770h2M108,755h2M420,188h3M1245,1065h2"/><path stroke="#c9b2d8" d="M1252,1297h6"/><path stroke="#f7c5d3" d="M530,992h4M1065,1170h3"/><path stroke="#9ea4e2" d="M440,435h10M470,425h6M875,43h100M1150,40h8M1270,42h60"/><path stroke="#8ebdf0" d="M562,943h2"/></g>
</g>
<g transform="translate(2640 740) scale(.40816 .54847)">
<path fill="#727ad5" d="${russiaEast}"/>
<g class="land">${draw(east)}</g>
<g class="none"><path d="M165,405L195,412 215,418 235,412 242,430 238,448 195,450 170,430Z"/><path d="M425,512L440,495 470,490 475,502 455,508Z"/><path d="M722,365L740,345 768,335 770,362 765,382 748,388 740,372Z"/></g>
<g class="line"><path d="M0,205L70,218 130,243 170,250 240,268M548,228L600,230 690,268 750,278 765,325M385,510L400,518 440,515"/></g>
<g class="open"><path d="M785,545L797,538 803,555 795,578 785,570Z"/><path d="M915,322L930,308 945,300"/><path d="M1345,1115L1355,1135 1370,1140M1378,1120L1390,1132"/></g>
<g class="dots" stroke="#f3c6d4"><path d="M1285,922L1300,945M1310,948L1322,955M1330,965L1342,972M1350,958L1368,978M1225,880L1245,890M1188,884h4M1408,1050l6,10M1422,1038l1,12M1418,1095v10"/><path stroke="#d9b4d8" d="M535,825l4,5M560,850l5,6M575,875l10,15M825,710L805,745M690,806h3M675,890h14M895,880h25M1040,880h4M920,858h8M980,958h10M1015,935h10M1475,780h3M1528,1085h5M15,1115h6M1070,958L1090,950"/><path stroke="#c9c9ea" stroke-width="2" d="M482,685v30M868,485v6M862,520v4M828,549h6M985,208h12M1088,231h20M1150,238h6M1172,240h4M503,766h2M12,916h2"/><path stroke="#cfcfcf" d="M38,1447h10M60,1486h5M1144,662h2M1138,685h2M1025,760h2M1050,1463h2"/><path stroke="#9ea4e2" d="M10,35h40M70,40h70M420,57h50M490,60h60M845,82h8"/></g>
</g></g>
<g class="line" transform="translate(1550 720) scale(.44643 .57398)"><path d="M605,291L875,291 905,300 940,297 960,310 975,325 970,350 950,362 1000,350 1060,335 1095,328 1125,310M675,124L565,190"/></g>
</svg>`);

/* Label set to a given measure: by glyph width, or by tracking with the track attribute.
   Registered last so inherited fonts are in place when it measures. */
make('fit-text', '<style>:host{display:block;flex:none;white-space:nowrap}span{display:inline-block;transform-origin:0 50%}</style><span><slot></slot></span>', el => {
  const s = el.shadowRoot.querySelector('span'), n = el.textContent.length, w = +el.getAttribute('w');
  if (!w) return;
  const nat = s.getBoundingClientRect().width;
  if (el.hasAttribute('track')) { s.style.letterSpacing = ((w - nat) / n).toFixed(3) + 'px'; return; }
  el.style.width = w + 'px';
  s.style.transform = 'scaleX(' + (w / nat).toFixed(4) + ')';
});
</script>
</body>
</html>
